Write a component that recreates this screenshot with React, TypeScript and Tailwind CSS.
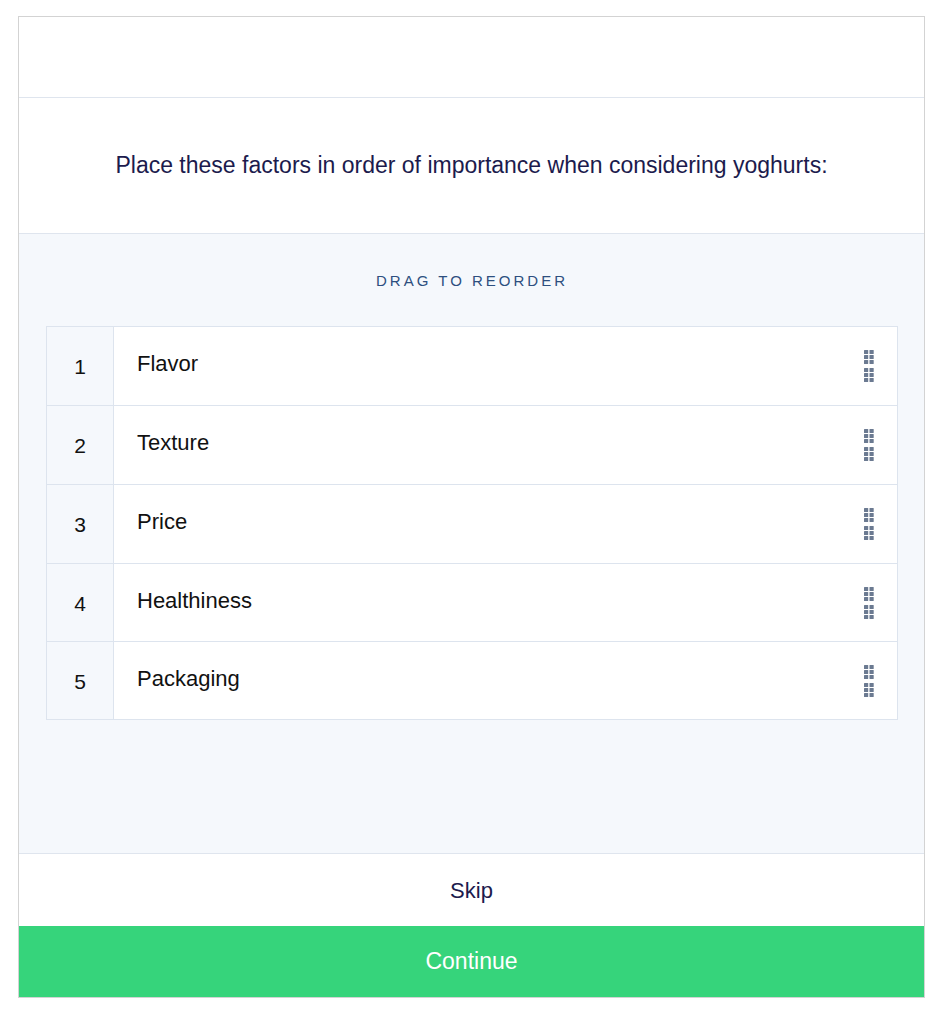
import React from 'react';

const factors = ['Flavor', 'Texture', 'Price', 'Healthiness', 'Packaging'];
// row heights include the bottom divider
const rowHeights = ['h-[79px]', 'h-[79px]', 'h-[79px]', 'h-[78px]', 'h-[77px]'];

const DragHandle: React.FC = () => {
  const rows = [0, 5, 10, 18, 23, 28];
  return (
    <svg width="10" height="32" viewBox="0 0 10 32" className="shrink-0">
      {rows.map((y) => (
        <g key={y} fill="#6b7a91">
          <rect x="0" y={y} width="4.2" height="4" rx="0.5" />
          <rect x="5.5" y={y} width="4.2" height="4" rx="0.5" />
        </g>
      ))}
    </svg>
  );
};

const App: React.FC = () => {
  return (
    <div className="min-h-screen bg-white pt-4 pl-[18px] font-['Liberation_Sans',Arial,sans-serif]">
      <div className="w-[907px] border border-[#d3d3d3] flex flex-col">
        {/* Empty header */}
        <div className="h-[81px] border-b border-[#dfe5ee]" />

        {/* Question */}
        <div className="h-[136px] border-b border-[#dfe5ee] flex items-center justify-center">
          <p className="text-[23px] text-[#1c1b4d]">
            Place these factors in order of importance when considering yoghurts:
          </p>
        </div>

        {/* Ranking area */}
        <div className="h-[620px] bg-[#f5f8fc] border-b border-[#dfe5ee] pl-[27px] pr-[26px]">
          <div className="h-[92px] flex items-center justify-center pt-[3px]">
            <span className="text-[15px] tracking-[3px] text-[#2d4f7f]">DRAG TO REORDER</span>
          </div>
          <div className="border border-[#dde4ee] bg-white">
            {factors.map((f, i) => (
              <div
                key={f}
                className={`flex ${rowHeights[i]} ${i < factors.length - 1 ? 'border-b border-[#dde4ee]' : ''}`}
              >
                <div className="w-[67px] bg-[#f5f8fc] border-r border-[#dde4ee] flex items-center justify-center text-[21px] text-[#111] pt-[2px]">
                  {i + 1}
                </div>
                <div className="flex-1 flex items-center justify-between pl-[23px] pr-[23px]">
                  <span className="text-[22px] text-[#111] pb-[5px]">{f}</span>
                  <DragHandle />
                </div>
              </div>
            ))}
          </div>
        </div>

        {/* Skip */}
        <button className="h-[72px] bg-white flex items-center justify-center text-[22px] text-[#1c1b4d]">
          Skip
        </button>

        {/* Continue */}
        <button className="h-[71px] bg-[#36d47b] flex items-center justify-center text-[23px] text-white">
          Continue
        </button>
      </div>
    </div>
  );
};

export default App;
